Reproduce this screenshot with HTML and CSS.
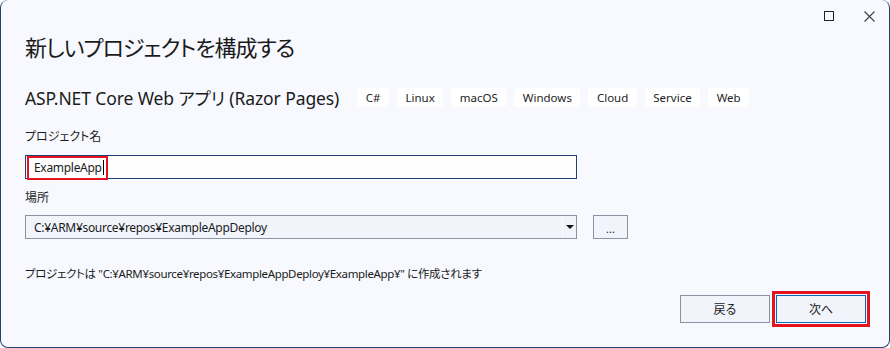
FILE: index.html
```html
<!DOCTYPE html>
<html lang="ja">
<head>
  <meta charset="UTF-8">
  <title>新しいプロジェクトを構成する</title>
  <link rel="stylesheet" href="styles.css">
</head>
<body>

<div class="window">
  <div class="titlebar">
    <span class="tb-btn"><span class="max-icon"></span></span>
    <span class="tb-btn">
      <svg width="11" height="11" viewBox="0 0 11 11"><path d="M0.5 0.5L10.5 10.5M10.5 0.5L0.5 10.5" stroke="#3a3f4a" stroke-width="1.1" fill="none"/></svg>
    </span>
  </div>

  <div class="content">
    <h1 class="title">新しいプロジェクトを構成する</h1>

    <div class="template-row">
      <span class="template-name">ASP.NET Core Web アプリ (Razor Pages)</span>
      <div class="tags">
        <span class="tag">C#</span>
        <span class="tag">Linux</span>
        <span class="tag">macOS</span>
        <span class="tag">Windows</span>
        <span class="tag">Cloud</span>
        <span class="tag">Service</span>
        <span class="tag">Web</span>
      </div>
    </div>

    <label class="field-label">プロジェクト名</label>
    <div class="input-box">
      <span class="input-text">ExampleApp</span><span class="caret"></span>
      <span class="mark"></span>
    </div>

    <label class="field-label label-place">場所</label>
    <div class="place-row">
      <div class="select-box">
        <span class="select-text">C:¥ARM¥source¥repos¥ExampleAppDeploy</span>
        <span class="select-arrow"></span>
      </div>
      <button class="browse-btn">...</button>
    </div>

    <p class="summary">プロジェクトは "C:¥ARM¥source¥repos¥ExampleAppDeploy¥ExampleApp¥" に作成されます</p>

    <div class="actions">
      <button class="btn">戻る</button>
      <button class="btn btn-next">次へ</button>
    </div>
  </div>
</div>

</body>
</html>
```

FILE: styles.css
```css
* {
  margin: 0;
  padding: 0;
  box-sizing: border-box;
  font-family: "Noto Sans", "Noto Sans CJK JP", sans-serif;
  font-feature-settings: "palt";
}

body {
  background-color: #ffffff;
  width: 890px;
  height: 348px;
  overflow: hidden;
}

.window {
  width: 890px;
  height: 348px;
  background-color: #f7f9fe;
  border: 1px solid #23406f;
  border-top: none;
  border-radius: 8px;
  color: #1b1b1b;
}

.titlebar {
  height: 30px;
  display: flex;
  justify-content: flex-end;
  align-items: center;
  padding-right: 0;
  padding-top: 2px;
}

.tb-btn {
  width: 40px;
  height: 28px;
  display: flex;
  align-items: center;
  justify-content: center;
}

.max-icon {
  width: 10px;
  height: 10px;
  border: 1px solid #1c2433;
}

.content {
  padding: 0 23px 0 24px;
}

.title {
  font-size: 22px;
  font-weight: 400;
  line-height: 30px;
  height: 30px;
  margin-top: 2px;
  letter-spacing: -1px;
}

.template-row {
  display: flex;
  align-items: center;
  height: 19px;
  margin-top: 26px;
}

.template-name {
  font-size: 17.5px;
  letter-spacing: -0.1px;
  margin-right: 18px;
  white-space: nowrap;
}

.tags {
  display: flex;
  gap: 8px;
}

.tag {
  background-color: #ffffff;
  border-radius: 3px;
  height: 19px;
  line-height: 19px;
  padding: 0 8.5px;
  font-size: 11.5px;
  color: #1e1e1e;
}

.field-label {
  display: block;
  font-size: 12px;
  line-height: 16px;
  margin-top: 22px;
}

.label-place {
  margin-top: 11px;
}

.input-box {
  position: relative;
  width: 552px;
  height: 24px;
  margin-top: 10px;
  background-color: #fefefe;
  border: 1px solid #1f3f76;
  display: flex;
  align-items: center;
  padding-left: 8px;
  font-size: 12px;
  letter-spacing: -0.3px;
}

.caret {
  width: 1px;
  height: 15px;
  background-color: #000000;
  margin-left: 1px;
}

.mark {
  position: absolute;
  left: 1px;
  top: 0px;
  width: 81px;
  height: 24px;
  border: 2px solid #e3141f;
}

.place-row {
  display: flex;
  gap: 16px;
  margin-top: 9px;
}

.select-box {
  width: 552px;
  height: 24px;
  background-color: #f1f4fb;
  border: 1px solid #8a93a3;
  display: flex;
  align-items: center;
  padding-left: 8px;
  font-size: 12px;
  letter-spacing: -0.3px;
}

.select-text {
  flex: 1;
}

.select-arrow {
  width: 14px;
  height: 22px;
  border-left: 1px solid #fafbfe;
  display: flex;
  align-items: center;
  justify-content: center;
}

.select-arrow::after {
  content: "";
  border-left: 4px solid transparent;
  border-right: 4px solid transparent;
  border-top: 4px solid #111111;
}

.browse-btn {
  width: 35px;
  height: 24px;
  background-color: #f1f4fb;
  border: 1px solid #8a93a3;
  font-size: 11px;
  line-height: 18px;
  padding-top: 4px;
  color: #1b1b1b;
}

.summary {
  font-size: 11.5px;
  line-height: 16px;
  margin-top: 27px;
  letter-spacing: -0.35px;
}

.actions {
  display: flex;
  justify-content: flex-end;
  gap: 6px;
  margin-top: 13px;
}

.btn {
  width: 90px;
  height: 28px;
  background-color: #f1f4fb;
  border: 1px solid #8a93a3;
  font-size: 12px;
  color: #1b1b1b;
}

.btn-next {
  border-color: #0a67c0;
  outline: 3px solid #e3141f;
  outline-offset: 1px;
}
```
